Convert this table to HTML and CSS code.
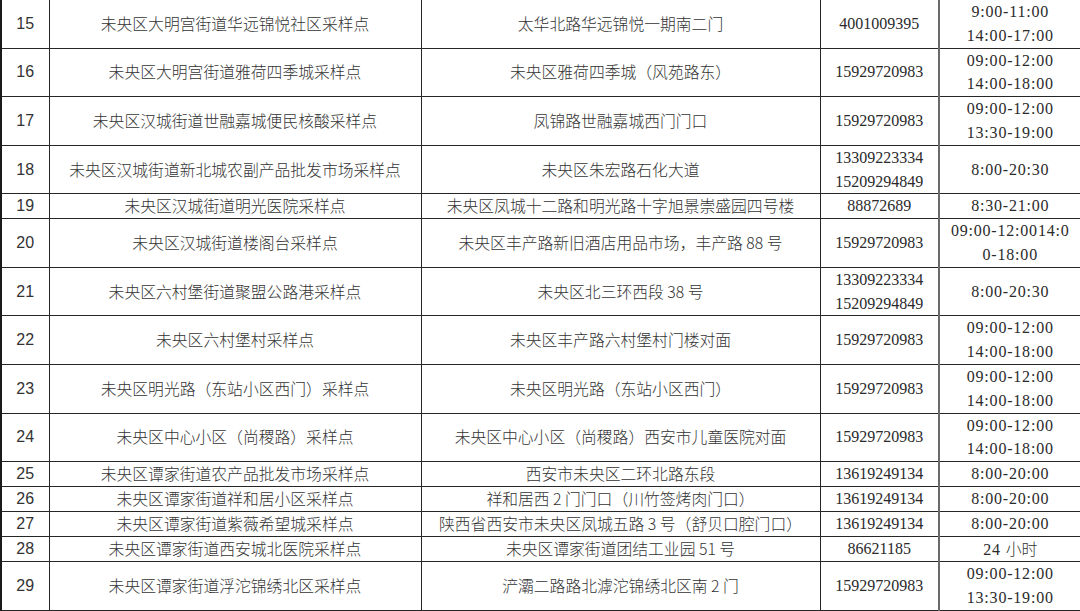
FILE: index.html
```html
<!DOCTYPE html>
<html lang="zh-CN">
<head>
<meta charset="utf-8">
<title>采样点列表</title>
<link rel="stylesheet" href="styles.css">
</head>
<body>
<table class="sites">
  <colgroup>
    <col class="c-no"><col class="c-name"><col class="c-addr"><col class="c-tel"><col class="c-time">
  </colgroup>
  <tbody>
    <tr><td class="no">15</td><td class="cjk">未央区大明宫街道华远锦悦社区采样点</td><td class="cjk">太华北路华远锦悦一期南二门</td><td class="tel">4001009395</td><td class="time">9:00-11:00<br>14:00-17:00</td></tr>
    <tr><td class="no">16</td><td class="cjk">未央区大明宫街道雅荷四季城采样点</td><td class="cjk">未央区雅荷四季城（风苑路东）</td><td class="tel">15929720983</td><td class="time">09:00-12:00<br>14:00-18:00</td></tr>
    <tr><td class="no">17</td><td class="cjk">未央区汉城街道世融嘉城便民核酸采样点</td><td class="cjk">凤锦路世融嘉城西门门口</td><td class="tel">15929720983</td><td class="time">09:00-12:00<br>13:30-19:00</td></tr>
    <tr><td class="no">18</td><td class="cjk">未央区汉城街道新北城农副产品批发市场采样点</td><td class="cjk">未央区朱宏路石化大道</td><td class="tel">13309223334<br>15209294849</td><td class="time">8:00-20:30</td></tr>
    <tr><td class="no">19</td><td class="cjk">未央区汉城街道明光医院采样点</td><td class="cjk">未央区凤城十二路和明光路十字旭景崇盛园四号楼</td><td class="tel">88872689</td><td class="time">8:30-21:00</td></tr>
    <tr><td class="no">20</td><td class="cjk">未央区汉城街道楼阁台采样点</td><td class="cjk">未央区丰产路新旧酒店用品市场，丰产路 88 号</td><td class="tel">15929720983</td><td class="time">09:00-12:0014:0<br>0-18:00</td></tr>
    <tr><td class="no">21</td><td class="cjk">未央区六村堡街道聚盟公路港采样点</td><td class="cjk">未央区北三环西段 38 号</td><td class="tel">13309223334<br>15209294849</td><td class="time">8:00-20:30</td></tr>
    <tr><td class="no">22</td><td class="cjk">未央区六村堡村采样点</td><td class="cjk">未央区丰产路六村堡村门楼对面</td><td class="tel">15929720983</td><td class="time">09:00-12:00<br>14:00-18:00</td></tr>
    <tr><td class="no">23</td><td class="cjk">未央区明光路（东站小区西门）采样点</td><td class="cjk">未央区明光路（东站小区西门）</td><td class="tel">15929720983</td><td class="time">09:00-12:00<br>14:00-18:00</td></tr>
    <tr><td class="no">24</td><td class="cjk">未央区中心小区（尚稷路）采样点</td><td class="cjk">未央区中心小区（尚稷路）西安市儿童医院对面</td><td class="tel">15929720983</td><td class="time">09:00-12:00<br>14:00-18:00</td></tr>
    <tr><td class="no">25</td><td class="cjk">未央区谭家街道农产品批发市场采样点</td><td class="cjk">西安市未央区二环北路东段</td><td class="tel">13619249134</td><td class="time">8:00-20:00</td></tr>
    <tr><td class="no">26</td><td class="cjk">未央区谭家街道祥和居小区采样点</td><td class="cjk">祥和居西 2 门门口（川竹签烤肉门口）</td><td class="tel">13619249134</td><td class="time">8:00-20:00</td></tr>
    <tr><td class="no">27</td><td class="cjk">未央区谭家街道紫薇希望城采样点</td><td class="cjk">陕西省西安市未央区凤城五路 3 号（舒贝口腔门口）</td><td class="tel">13619249134</td><td class="time">8:00-20:00</td></tr>
    <tr><td class="no">28</td><td class="cjk">未央区谭家街道西安城北医院采样点</td><td class="cjk">未央区谭家街道团结工业园 51 号</td><td class="tel">86621185</td><td class="time">24 <span class="han">小时</span></td></tr>
    <tr><td class="no">29</td><td class="cjk">未央区谭家街道浮沱锦绣北区采样点</td><td class="cjk">浐灞二路路北滹沱锦绣北区南 2 门</td><td class="tel">15929720983</td><td class="time">09:00-12:00<br>13:30-19:00</td></tr>
  </tbody>
</table>
</body>
</html>
```
FILE: styles.css
```css
html, body {
  margin: 0;
  padding: 0;
  background: #ffffff;
}

.sites {
  border-collapse: collapse;
  table-layout: fixed;
  width: 1080px;
  margin-top: -1px;
}

.c-no { width: 48px; }
.c-name { width: 372px; }
.c-addr { width: 399px; }
.c-tel { width: 119px; }
.c-time { width: 142px; }

.sites td {
  border: 1px solid #262626;
  padding: 0 1px;
  text-align: center;
  vertical-align: middle;
  line-height: 23.8px;
  font-size: 16px;
  color: #2e2e2e;
  white-space: nowrap;
  overflow: hidden;
}

.sites td.no {
  font-family: "Liberation Sans", Arial, sans-serif;
  color: #333333;
  border-left: 2px solid #1a1a1a;
}

.sites td.cjk {
  font-family: "Noto Sans CJK SC", "Noto Sans", sans-serif;
  font-size: 15.8px;
  font-weight: 300;
  color: #333333;
}

.sites td.tel {
  font-family: "Liberation Serif", "Noto Sans CJK SC", serif;
  color: #2a2a2a;
}

.sites td.time {
  font-family: "Liberation Serif", "Noto Sans CJK SC", serif;
  color: #2a2a2a;
  letter-spacing: 0.8px;
  border-left: 2px solid #6a6a6a;
}

.sites td.time .han {
  font-family: "Noto Sans CJK SC", sans-serif;
  font-weight: 300;
  font-size: 15.8px;
  letter-spacing: 0;
  color: #333333;
}
```
